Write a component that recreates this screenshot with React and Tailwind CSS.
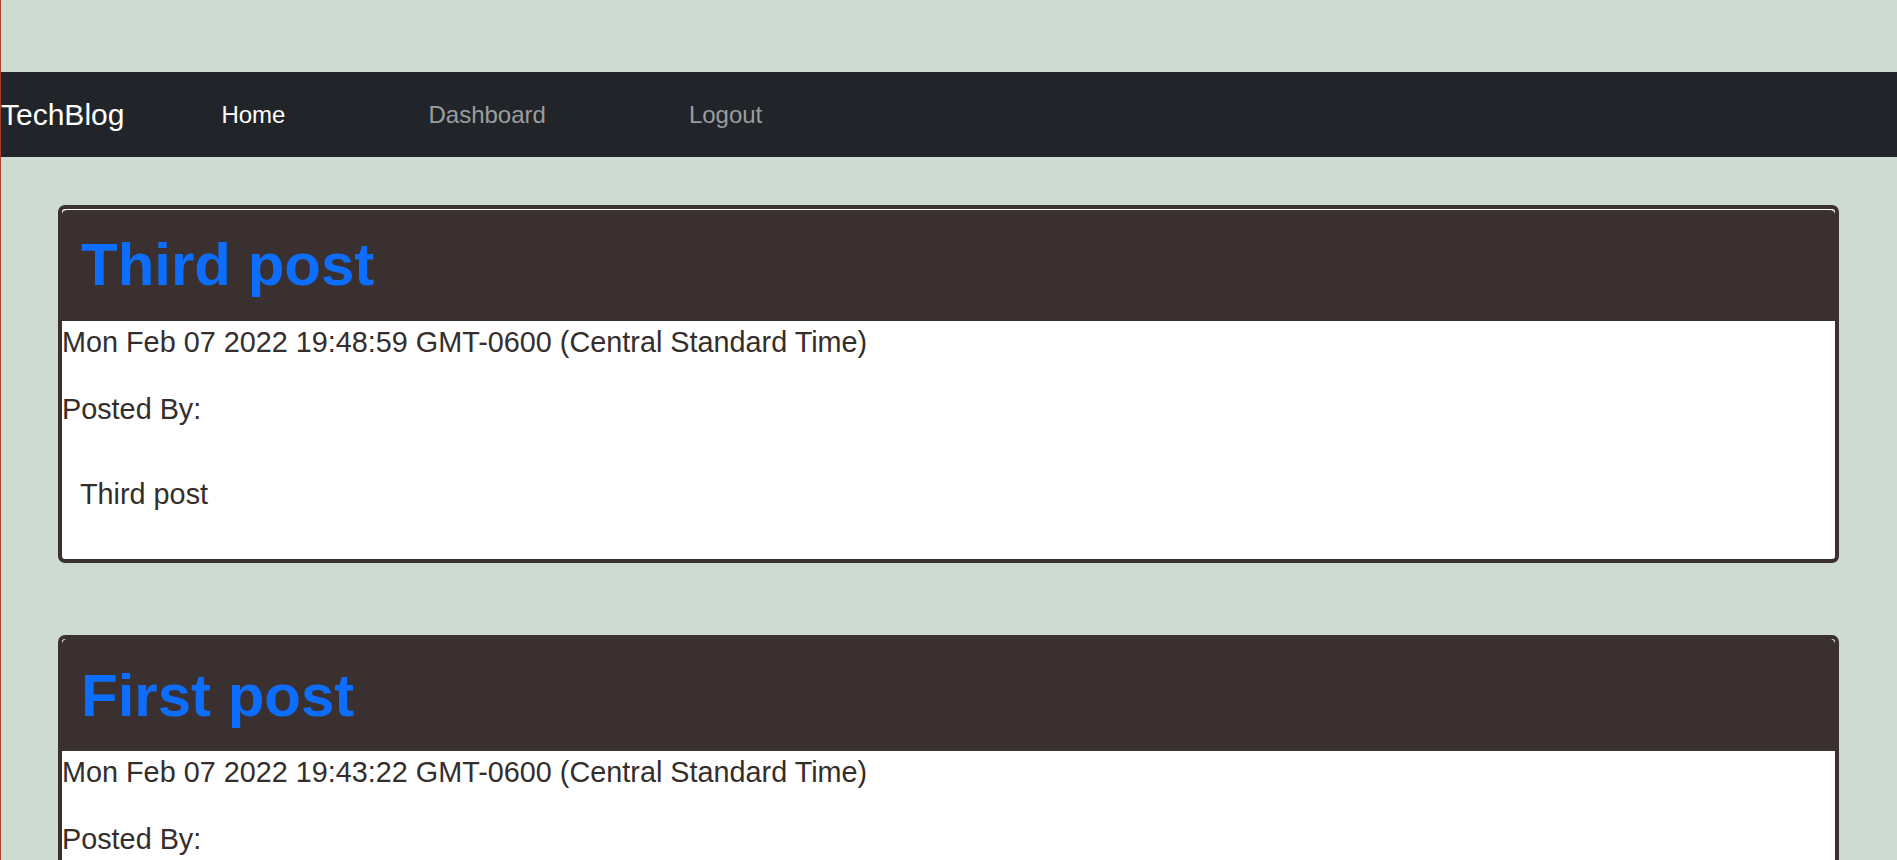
export default function App() {
  const posts = [
    {
      title: "Third post",
      date: "Mon Feb 07 2022 19:48:59 GMT-0600 (Central Standard Time)",
      content: "Third post",
      line: true,
    },
    {
      title: "First post",
      date: "Mon Feb 07 2022 19:43:22 GMT-0600 (Central Standard Time)",
      content: "First post",
      line: false,
    },
  ];
  return (
    <div className="h-[860px] overflow-hidden bg-[#cddbd2] border-l border-[#a8402c] font-['Liberation_Sans',Arial,sans-serif] text-[#352d2b]">
      <div className="h-[72px]" />
      <nav className="h-[85px] bg-[#212529] flex items-center">
        <a className="text-[30px] leading-[45px] text-white">TechBlog</a>
        <div className="flex ml-[97px] gap-[143px] text-[24px] leading-[36px]">
          <a className="text-white">Home</a>
          <a className="text-[#9b9d9f]">Dashboard</a>
          <a className="text-[#9b9d9f]">Logout</a>
        </div>
      </nav>
      <main className="pt-[48px] pl-[57px] pr-[58px] flex flex-col gap-[72px]">
        {posts.map((p) => (
          <article
            key={p.title}
            className="border-4 border-[#3a302f] rounded-[7px] bg-white overflow-hidden"
          >
            <header
              className={
                p.line
                  ? "h-[112px] bg-[#3a302f] border-t border-white rounded-t-[5px] pl-[19px] pt-[19px]"
                  : "h-[112px] bg-[#3a302f] rounded-t-[5px] pl-[19px] pt-[21px]"
              }
            >
              <h1 className="text-[60px] leading-[72px] font-bold text-[#0d6efd]">
                {p.title}
              </h1>
            </header>
            <div className="text-[28.8px] leading-[43.2px]">
              <p className="mb-[24px]">{p.date}</p>
              <p className="mb-[24px]">Posted By:</p>
              <div className="p-[18px] mb-[24px]">
                <p>{p.content}</p>
              </div>
            </div>
          </article>
        ))}
      </main>
    </div>
  );
}
